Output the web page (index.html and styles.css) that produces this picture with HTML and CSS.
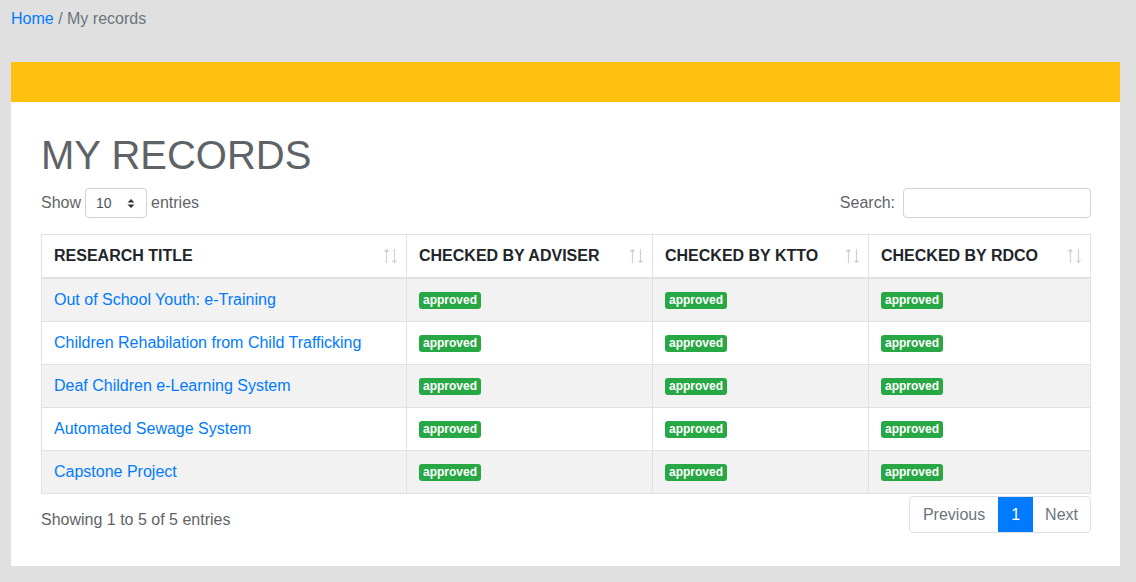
FILE: index.html
```html
<!DOCTYPE html>
<html>
<head>
<meta charset="utf-8">
<link rel="stylesheet" href="styles.css">
</head>
<body>
<nav class="crumbs"><a href="#">Home</a> <span class="sep">/</span> My records</nav>
<div class="card">
  <div class="card-top"></div>
  <div class="card-body">
    <h1 class="title">MY RECORDS</h1>
    <div class="controls">
      <label class="length">Show
        <span class="select">10<svg width="8" height="11" viewBox="0 0 8 11"><path d="M4 1 L7.5 4.5 H0.5 Z M4 10 L7.5 6.5 H0.5 Z" fill="#333"/></svg></span>
        entries</label>
      <label class="search">Search: <span class="input"></span></label>
    </div>
    <table class="records">
      <thead>
        <tr>
          <th class="c1">RESEARCH TITLE<svg class="sort" width="13" height="16" viewBox="0 0 13 16"><path d="M2.5 1.5 V15 M0.5 3.5 L2.5 1.5 L4.5 3.5 M10.5 1 V14.5 M8.5 12.5 L10.5 14.5 L12.5 12.5" stroke="#cfd2d6" stroke-width="1.2" fill="none"/></svg></th>
          <th class="c2">CHECKED BY ADVISER<svg class="sort" width="13" height="16" viewBox="0 0 13 16"><path d="M2.5 1.5 V15 M0.5 3.5 L2.5 1.5 L4.5 3.5 M10.5 1 V14.5 M8.5 12.5 L10.5 14.5 L12.5 12.5" stroke="#cfd2d6" stroke-width="1.2" fill="none"/></svg></th>
          <th class="c3">CHECKED BY KTTO<svg class="sort" width="13" height="16" viewBox="0 0 13 16"><path d="M2.5 1.5 V15 M0.5 3.5 L2.5 1.5 L4.5 3.5 M10.5 1 V14.5 M8.5 12.5 L10.5 14.5 L12.5 12.5" stroke="#cfd2d6" stroke-width="1.2" fill="none"/></svg></th>
          <th class="c4">CHECKED BY RDCO<svg class="sort" width="13" height="16" viewBox="0 0 13 16"><path d="M2.5 1.5 V15 M0.5 3.5 L2.5 1.5 L4.5 3.5 M10.5 1 V14.5 M8.5 12.5 L10.5 14.5 L12.5 12.5" stroke="#cfd2d6" stroke-width="1.2" fill="none"/></svg></th>
        </tr>
      </thead>
      <tbody>
        <tr><td><a href="#">Out of School Youth: e-Training</a></td><td><span class="badge">approved</span></td><td><span class="badge">approved</span></td><td><span class="badge">approved</span></td></tr>
        <tr><td><a href="#">Children Rehabilation from Child Trafficking</a></td><td><span class="badge">approved</span></td><td><span class="badge">approved</span></td><td><span class="badge">approved</span></td></tr>
        <tr><td><a href="#">Deaf Children e-Learning System</a></td><td><span class="badge">approved</span></td><td><span class="badge">approved</span></td><td><span class="badge">approved</span></td></tr>
        <tr><td><a href="#">Automated Sewage System</a></td><td><span class="badge">approved</span></td><td><span class="badge">approved</span></td><td><span class="badge">approved</span></td></tr>
        <tr><td><a href="#">Capstone Project</a></td><td><span class="badge">approved</span></td><td><span class="badge">approved</span></td><td><span class="badge">approved</span></td></tr>
      </tbody>
    </table>
    <div class="footer">
      <div class="info">Showing 1 to 5 of 5 entries</div>
      <div class="pager">
        <span class="page prev">Previous</span><span class="page active">1</span><span class="page next">Next</span>
      </div>
    </div>
  </div>
</div>
</body>
</html>
```

FILE: styles.css
```css
html, body {
  margin: 0;
  padding: 0;
}
body {
  background: #e0e0e0;
  font-family: "Liberation Sans", Arial, sans-serif;
  font-size: 16px;
  line-height: 24px;
  color: #5f6468;
  height: 582px;
  overflow: hidden;
}
a {
  color: #007bff;
  text-decoration: none;
}
.crumbs {
  padding: 7px 11px 0;
  height: 24px;
  color: #6c757d;
}
.card {
  margin: 31px 16px 0 11px;
  background: #fff;
}
.card-top {
  height: 40px;
  background: #ffc010;
}
.card-body {
  padding: 29px 29px 33px 30px;
}
.title {
  margin: 0;
  font-size: 40px;
  line-height: 48px;
  font-weight: 400;
  color: #5e6367;
}
.controls {
  margin-top: 9px;
  display: flex;
  justify-content: space-between;
  align-items: center;
  height: 30px;
}
.length {
  display: flex;
  align-items: center;
  gap: 4px;
}
.search {
  display: flex;
  align-items: center;
  gap: 8px;
}
.select {
  box-sizing: border-box;
  width: 62px;
  height: 30px;
  border: 1px solid #ced4da;
  border-radius: 4px;
  display: flex;
  align-items: center;
  justify-content: space-between;
  padding: 0 11px 0 10px;
  font-size: 14px;
  color: #495057;
}
.search .input {
  box-sizing: border-box;
  width: 188px;
  height: 30px;
  border: 1px solid #ced4da;
  border-radius: 4px;
  display: block;
}
.records {
  margin-top: 16px;
  width: 1050px;
  border-collapse: collapse;
  border: 1px solid #dee2e6;
}
.records th, .records td {
  border: 1px solid #dee2e6;
  text-align: left;
  padding: 9px 12px;
  vertical-align: middle;
}
.records th {
  position: relative;
  font-weight: 700;
  color: #212529;
  padding: 9px 12px 9px 12px;
  height: 24px;
  border-bottom: 2px solid #dee2e6;
}
.records td {
  height: 24px;
}
.c1 { width: 340px; }
.c2 { width: 221px; }
.c3 { width: 191px; }
.sort {
  position: absolute;
  right: 9px;
  top: 13px;
}
.records tbody tr:nth-child(odd) td {
  background: #f2f2f2;
}
.badge {
  display: inline-block;
  background: #28a745;
  color: #fff;
  font-size: 12px;
  font-weight: 700;
  line-height: 17px;
  padding: 0 4px 0 4px;
  border-radius: 3px;
  vertical-align: 1px;
}
.footer {
  display: flex;
  justify-content: space-between;
  align-items: flex-start;
  margin-top: 2px;
}
.info {
  padding-top: 12px;
}
.pager {
  display: flex;
  border: 1px solid #dee2e6;
  border-radius: 4px;
  overflow: hidden;
}
.page {
  height: 35px;
  line-height: 35px;
  padding: 0 12px;
  color: #6c757d;
}
.prev {
  padding: 0 13px;
}
.active {
  background: #007bff;
  color: #fff;
  padding: 0 13px;
}
```
